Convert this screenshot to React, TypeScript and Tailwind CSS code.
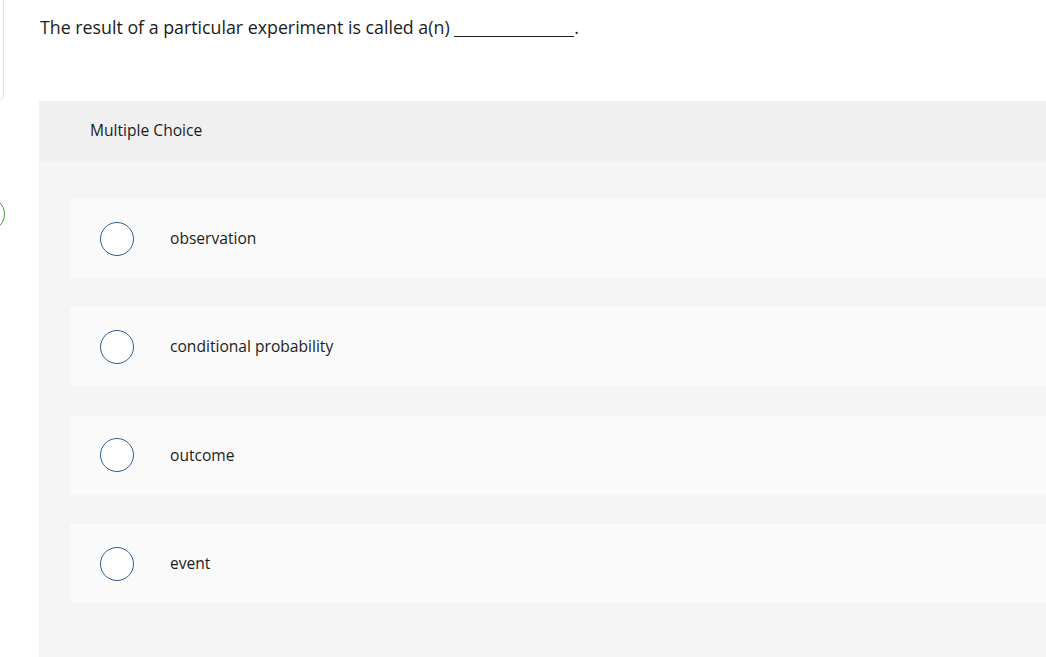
import React from 'react';

const options = ['observation', 'conditional probability', 'outcome', 'event'];

const Radio = () => (
  <span className="block w-[34px] h-[34px] rounded-full border-[1.5px] border-[#2f5f8f] bg-white shrink-0" />
);

export default function App() {
  return (
    <div className="relative h-[657px] w-[1046px] overflow-hidden bg-white font-['Open_Sans',sans-serif] text-[#1c1c1c]">
      {/* neighbouring card edge and status pill, mostly cut off */}
      <div className="absolute left-[-40px] top-[-10px] w-[44px] h-[111px] rounded-br-md border border-[#e3e3e3]" />
      <div className="absolute left-[-30px] top-[197px] w-[35px] h-[34px] rounded-full border border-[#4a9b3a]" />

      <div className="pl-[40px] pt-[15px] h-[101px]">
        <p className="text-[17.8px] leading-[24px]">
          The result of a particular experiment is called a(n) <span className="inline-block w-[120px] border-b border-[#1c1c1c] align-[-3px]" />.
        </p>
      </div>

      <div className="ml-[39px] flex flex-col">
        <div className="h-[60px] bg-[#f0f0f0] flex items-center pl-[51px] text-[15.6px]">Multiple Choice</div>
        <div className="bg-[#f5f5f5] pl-[31px] pt-[38px] pb-[60px] flex flex-col gap-[29.4px]">
          {options.map((o) => (
            <div key={o} className="h-[79px] bg-[#fafafa] rounded-l-[3px] flex items-center pl-[30px]">
              <Radio />
              <span className="ml-[36px] text-[15.6px]">{o}</span>
            </div>
          ))}
        </div>
      </div>
    </div>
  );
}
